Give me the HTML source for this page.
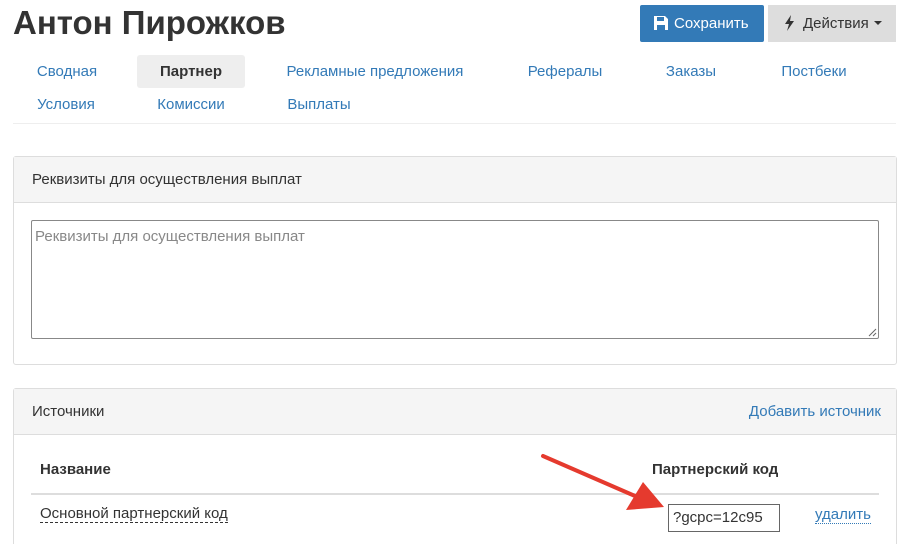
<!DOCTYPE html><html><head><meta charset="utf-8"><style>
html,body{margin:0;width:909px;height:544px;overflow:hidden}
body{background:#fff;font-family:"Liberation Sans",sans-serif;color:#333;position:relative}
.a{position:absolute}
h1{position:absolute;left:13px;top:4px;margin:0;font-size:33px;font-weight:bold;color:#333}
.tab{position:absolute;font-size:15px;color:#337ab7;height:33px;line-height:33px;text-align:center}
.panel{position:absolute;left:13px;width:882px;border:1px solid #ddd;border-radius:3px}
.ph{background:#f5f5f5;border-bottom:1px solid #ddd;height:45px;line-height:45px;padding-left:18px;font-size:15px;color:#333}
</style></head><body>
<h1>Антон Пирожков</h1>
<div class="a" style="left:640px;top:5px;width:124px;height:37px;background:#337ab7;border-radius:2px;color:#fff;font-size:15px;line-height:37px">
<svg class="a" style="left:14px;top:11px" width="14" height="14" viewBox="0 0 14 14"><path d="M0 0H11L14 3V14H0Z M3 1V5H10V1Z M3 9V14H11V9Z" fill="#fff" fill-rule="evenodd"/></svg>
<span class="a" style="left:34px">Сохранить</span></div>
<div class="a" style="left:768px;top:5px;width:128px;height:37px;background:#ddd;color:#333;font-size:15px;line-height:37px">
<svg class="a" style="left:16px;top:10px" width="11" height="16" viewBox="0 0 11 16"><path d="M7 0L1 9H5L3 16L10 6H6Z" fill="#333"/></svg>
<span class="a" style="left:35px">Действия</span>
<span class="a" style="left:106px;top:16px;width:0;height:0;border-left:4px solid transparent;border-right:4px solid transparent;border-top:4px solid #333"></span></div>
<div class="tab" style="left:20px;top:55px;width:94px">Сводная</div>
<div class="tab" style="left:137px;top:55px;width:108px;background:#eee;color:#333;font-weight:bold;border-radius:3px">Партнер</div>
<div class="tab" style="left:270px;top:55px;width:210px">Рекламные предложения</div>
<div class="tab" style="left:510px;top:55px;width:110px">Рефералы</div>
<div class="tab" style="left:645px;top:55px;width:92px">Заказы</div>
<div class="tab" style="left:765px;top:55px;width:98px">Постбеки</div>
<div class="tab" style="left:20px;top:88px;width:92px">Условия</div>
<div class="tab" style="left:140px;top:88px;width:102px">Комиссии</div>
<div class="tab" style="left:272px;top:88px;width:94px">Выплаты</div>
<div class="a" style="left:13px;top:123px;width:883px;height:1px;background:#eee"></div>
<div class="panel" style="top:156px;height:207px"><div class="ph">Реквизиты для осуществления выплат</div>
<div class="a" style="left:17px;top:63px;width:848px;height:119px;border:1px solid #888;border-radius:2px;font-size:15px;color:#888;padding:7px 3px;box-sizing:border-box">Реквизиты для осуществления выплат
<svg class="a" style="right:1px;bottom:1px" width="9" height="9"><path d="M8 1L1 8M8 5L5 8" stroke="#666"/></svg></div></div>
<div class="panel" style="top:388px;height:170px"><div class="ph">Источники<span class="a" style="right:15px;color:#337ab7">Добавить источник</span></div></div>
<div class="a" style="left:40px;top:461px;font-size:15px;font-weight:bold">Название</div>
<div class="a" style="left:652px;top:461px;font-size:15px;font-weight:bold">Партнерский код</div>
<div class="a" style="left:31px;top:493px;width:848px;height:2px;background:#ddd"></div>
<div class="a" style="left:40px;top:505px;font-size:15px;border-bottom:1px dashed #333">Основной партнерский код</div>
<div class="a" style="left:668px;top:504px;width:112px;height:28px;border:1px solid #666;box-sizing:border-box;font-size:15px;line-height:26px;padding-left:4px">?gcpc=12c95</div>
<div class="a" style="left:815px;top:506px;font-size:15px;color:#337ab7;border-bottom:1px dotted #337ab7;line-height:17px">удалить</div>
<svg class="a" style="left:535px;top:448px" width="135" height="70"><path d="M8 8L100 48" stroke="#e53a2e" stroke-width="4" stroke-linecap="round"/><path d="M129 59L91 62L108 34Z" fill="#e53a2e"/></svg>
</body></html>
